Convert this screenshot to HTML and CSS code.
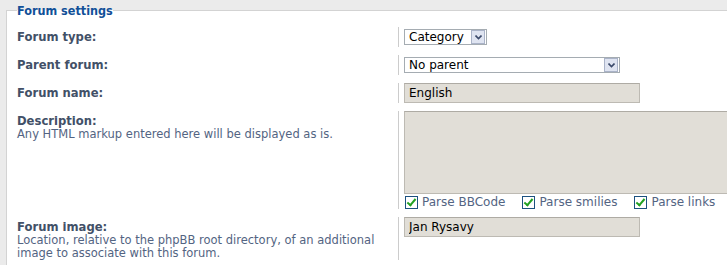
FILE: index.html
```html
<!DOCTYPE html>
<html lang="en">
<head>
  <meta charset="UTF-8" />
  <title>Forum settings</title>
  <link rel="stylesheet" href="styles.css">
</head>
<body>
  <fieldset class="settings">
    <legend>Forum settings</legend>

    <dl>
      <dt><label for="forum_type">Forum type:</label></dt>
      <dd>
        <span class="select select-type">
          <select id="forum_type">
            <option>Category</option>
            <option>Forum</option>
            <option>Link</option>
          </select>
          <span class="select-btn">
            <svg width="7" height="5" viewBox="0 0 7 5"><path d="M0.5 0.5 L3.5 3.5 L6.5 0.5" fill="none" stroke="#3b4a6b" stroke-width="1.6"/></svg>
          </span>
        </span>
      </dd>
    </dl>

    <dl>
      <dt><label for="parent_id">Parent forum:</label></dt>
      <dd>
        <span class="select select-parent">
          <select id="parent_id">
            <option>No parent</option>
          </select>
          <span class="select-btn">
            <svg width="7" height="5" viewBox="0 0 7 5"><path d="M0.5 0.5 L3.5 3.5 L6.5 0.5" fill="none" stroke="#3b4a6b" stroke-width="1.6"/></svg>
          </span>
        </span>
      </dd>
    </dl>

    <dl>
      <dt><label for="forum_name">Forum name:</label></dt>
      <dd><input type="text" id="forum_name" class="text" value="English"></dd>
    </dl>

    <dl>
      <dt>
        <label for="forum_desc">Description:</label><br>
        <span class="explain">Any HTML markup entered here will be displayed as is.</span>
      </dt>
      <dd>
        <textarea id="forum_desc" class="desc"></textarea>
        <div class="options">
          <label><input type="checkbox" checked><span class="box"></span>Parse BBCode</label>
          <label><input type="checkbox" checked><span class="box"></span>Parse smilies</label>
          <label><input type="checkbox" checked><span class="box"></span>Parse links</label>
        </div>
      </dd>
    </dl>

    <dl>
      <dt>
        <label for="forum_image">Forum image:</label><br>
        <span class="explain">Location, relative to the phpBB root directory, of an additional image to associate with this forum.</span>
      </dt>
      <dd class="tall"><input type="text" id="forum_image" class="text" value="Jan Rysavy"></dd>
    </dl>
  </fieldset>
</body>
</html>
```

FILE: styles.css
```css
* {
  box-sizing: border-box;
}

body {
  margin: 0;
  background: #ebebeb;
  font-family: "DejaVu Sans", Verdana, sans-serif;
  font-size: 11.5px;
  color: #000;
  overflow: hidden;
}

.settings {
  width: 900px;
  margin: 3px 0 0 6px;
  padding: 5px 0 30px 10px;
  border: 1px solid #d3d3d3;
  border-right: none;
  background: #fff;
}

.settings legend {
  padding: 0;
  color: #115098;
  font-family: "DejaVu Sans Condensed", "DejaVu Sans", sans-serif;
  font-size: 12.5px;
  font-weight: bold;
  line-height: 15px;
}

dl {
  display: flex;
  margin: 0;
  padding: 4px 0;
}

dt {
  width: 381px;
  flex-shrink: 0;
  padding-top: 4px;
  line-height: 13px;
}

dt label {
  color: #425067;
  font-size: 11.6px;
  font-weight: bold;
}

.explain {
  color: #536482;
}

dd {
  margin: 0;
  min-height: 20px;
  padding-left: 5px;
  border-left: 1px solid #cccccc;
}

dd.tall {
  min-height: 42px;
}

/* Select boxes */
.select {
  display: inline-flex;
  align-items: center;
  height: 16px;
  margin-top: 2px;
  padding: 0 1px 0 0;
  border: 1px solid #a5acb2;
  background: #fff;
}

.select select {
  flex: 1;
  appearance: none;
  -webkit-appearance: none;
  border: none;
  background: transparent;
  padding: 0 0 0 4px;
  margin: 0;
  font-family: inherit;
  font-size: 12px;
  line-height: 14px;
  height: 14px;
  color: #000;
  outline: none;
}

.select-type {
  width: 83px;
}

.select-parent {
  width: 216px;
}

.select-btn {
  display: flex;
  align-items: center;
  justify-content: center;
  width: 14px;
  height: 14px;
  border: 1px solid #aab3c8;
  background: #dfe4f1;
}

/* Text fields */
.text,
.desc {
  display: block;
  border: 1px solid #bdbab3;
  border-top-color: #aeaba4;
  background: #e1ded7;
  font-family: inherit;
  font-size: 12px;
  color: #000;
  outline: none;
}

.text {
  width: 236px;
  height: 20px;
  padding: 0 4px;
}

.desc {
  width: 400px;
  height: 83px;
  resize: none;
  margin: 0;
}

/* Checkbox options */
.options {
  display: flex;
  gap: 16px;
  margin-top: 2px;
  color: #536482;
  font-size: 12px;
  line-height: 13px;
}

.options label {
  display: flex;
  align-items: center;
}

.options input {
  display: none;
}

.box {
  position: relative;
  width: 13px;
  height: 13px;
  margin: 0 4px 0 1px;
  border: 1px solid #1c5180;
  background: #fff;
}

.box::after {
  content: "";
  position: absolute;
  left: 3px;
  top: 0px;
  width: 3px;
  height: 7px;
  border: solid #21a121;
  border-width: 0 2px 2px 0;
  transform: rotate(40deg);
}
```
